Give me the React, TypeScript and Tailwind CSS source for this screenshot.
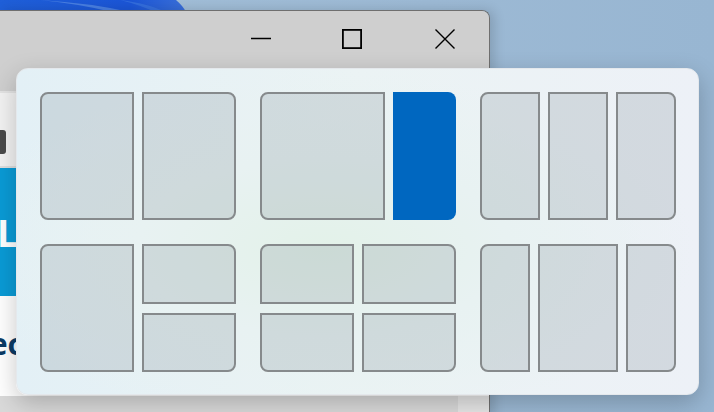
const tileBase = "border-2 border-[#868a8c] bg-[rgba(110,125,135,0.2)]";

// a column of tiles; stacked ones split the height
const Column = ({
  w,
  parts,
  first,
  last,
  blue,
}: {
  w: number;
  parts: number;
  first?: boolean;
  last?: boolean;
  blue?: boolean;
}) => {
  const round = `${first ? "rounded-tl-lg rounded-bl-lg" : ""} ${last ? "rounded-tr-lg rounded-br-lg" : ""}`;
  if (blue) {
    return <div style={{ width: w }} className={`h-full bg-[#0067c0] ${round}`} />;
  }
  if (parts === 1) {
    return <div style={{ width: w }} className={`h-full ${tileBase} ${round}`} />;
  }
  return (
    <div style={{ width: w }} className="flex h-full flex-col gap-[9px]">
      <div className={`flex-1 ${tileBase} ${last ? "rounded-tr-lg" : ""} ${first ? "rounded-tl-lg" : ""}`} />
      <div className={`flex-1 ${tileBase} ${last ? "rounded-br-lg" : ""} ${first ? "rounded-bl-lg" : ""}`} />
    </div>
  );
};

type Layout = { cols: { w: number; parts: number; blue?: boolean }[] };

const layouts: Layout[] = [
  { cols: [{ w: 94, parts: 1 }, { w: 94, parts: 1 }] },
  { cols: [{ w: 125, parts: 1 }, { w: 63, parts: 1, blue: true }] },
  { cols: [{ w: 60, parts: 1 }, { w: 60, parts: 1 }, { w: 60, parts: 1 }] },
  { cols: [{ w: 94, parts: 1 }, { w: 94, parts: 2 }] },
  { cols: [{ w: 94, parts: 2 }, { w: 94, parts: 2 }] },
  { cols: [{ w: 50, parts: 1 }, { w: 80, parts: 1 }, { w: 50, parts: 1 }] },
];

const LayoutGroup = ({ layout }: { layout: Layout }) => (
  <div className="flex h-[128px] w-[196px] gap-2">
    {layout.cols.map((c, i) => (
      <Column
        key={i}
        w={c.w}
        parts={c.parts}
        blue={c.blue}
        first={i === 0}
        last={i === layout.cols.length - 1}
      />
    ))}
  </div>
);

const Wallpaper = () => (
  <svg className="absolute left-0 top-0" width="200" height="12" viewBox="0 0 200 12">
    <defs>
      <linearGradient id="wp" x1="0" y1="0" x2="1" y2="0">
        <stop offset="0" stopColor="#1f5fd8" />
        <stop offset="0.7" stopColor="#1b55d6" />
        <stop offset="1" stopColor="#3a6fd8" />
      </linearGradient>
    </defs>
    <path d="M0 0 H176 Q183 6 186 12 H0 Z" fill="url(#wp)" />
    <path d="M40 0 Q90 3 130 12 H112 Q80 4 40 0 Z" fill="#5b8ee6" opacity="0.7" />
    <path d="M120 0 Q150 4 165 12 H155 Q140 5 120 0 Z" fill="#3f7ae0" opacity="0.6" />
  </svg>
);

export default function App() {
  return (
    <div className="relative h-[412px] w-[714px] overflow-hidden bg-[linear-gradient(90deg,#a3bfd8_0%,#9cb9d4_60%,#98b6d2_100%)] font-['Segoe_UI','Noto_Sans',sans-serif]">
      <Wallpaper />

      {/* app window behind the flyout */}
      <div className="absolute left-0 top-[10px] flex h-[410px] w-[490px] flex-col overflow-hidden rounded-tr-lg border-r border-t border-[#6f6f6f] shadow-[4px_0_12px_rgba(0,0,0,0.15)]">
        <div className="flex h-[80px] items-start justify-end bg-[#cfcfcf] pr-[34px] pt-[18px]">
          <svg width="20" height="20" viewBox="0 0 20 20" className="mr-[71px]">
            <path d="M0 9.5 H20" stroke="#000" strokeWidth="1.3" />
          </svg>
          <svg width="20" height="20" viewBox="0 0 20 20" className="mr-[73px]">
            <rect x="0.9" y="0.9" width="18.2" height="18.2" fill="none" stroke="#000" strokeWidth="1.8" />
          </svg>
          <svg width="20" height="20" viewBox="0 0 20 20">
            <path d="M0.5 0.5 L19.5 19.5 M19.5 0.5 L0.5 19.5" stroke="#000" strokeWidth="1.4" />
          </svg>
        </div>
        <div className="flex flex-1 flex-col bg-white">
          <div className="h-[75px] border-t-2 border-[#e3e3e3] bg-[#f2f2f2] pt-[37px]">
            <div className="h-[24px] w-[6px] rounded-r-[3px] bg-[#4a4a4a]" />
          </div>
          <div className="h-[2px] bg-[#dedede]" />
          <div className="flex h-[128px] items-center bg-[#0a9bd6]">
            <span className="-ml-[3px] text-[38px] font-bold leading-none text-white">L</span>
          </div>
          <div className="flex h-[100px] items-center bg-white pb-[4px]">
            <span className="-ml-[30px] text-[30px] font-bold leading-none text-[#0b3b66]">Rec</span>
          </div>
          <div className="flex h-[20px]">
            <div className="w-[458px] bg-[#d9d9d9]" />
            <div className="flex-1 bg-[#e6e6e6]" />
          </div>
        </div>
      </div>

      {/* snap layouts flyout */}
      <div className="absolute left-[16px] top-[68px] h-[327px] w-[683px] rounded-[12px] border border-[#e4e8ec] bg-[radial-gradient(ellipse_at_45%_55%,#e3f2e9_0%,#e8f2f2_35%,rgba(238,242,247,0)_70%),linear-gradient(90deg,#e3f0f6_0%,#ebf3f4_50%,#edf1f7_100%)] px-[23px] pt-[23px] shadow-[0_8px_24px_rgba(0,0,0,0.22)]">
        <div className="grid grid-cols-[196px_196px_196px] gap-x-6 gap-y-6">
          {layouts.map((l, i) => (
            <LayoutGroup key={i} layout={l} />
          ))}
        </div>
      </div>
    </div>
  );
}
